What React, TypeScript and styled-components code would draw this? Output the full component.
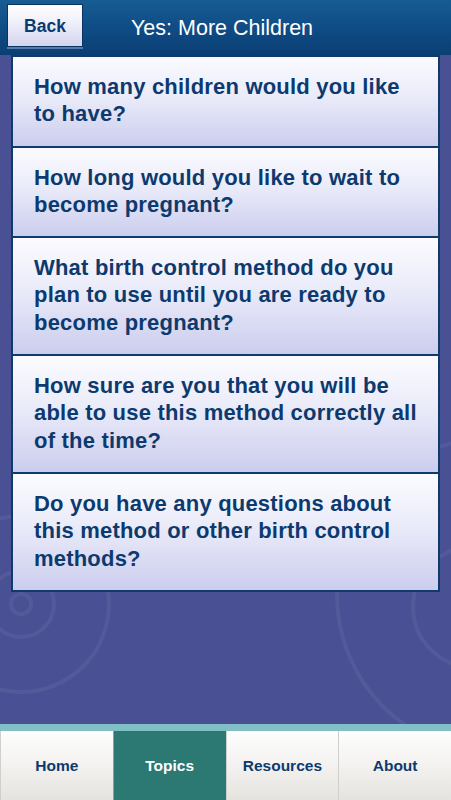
import React from "react";
import styled, { createGlobalStyle } from "styled-components";

const GlobalStyle = createGlobalStyle`
  html, body {
    margin: 0;
    padding: 0;
    height: 100%;
  }
  body {
    font-family: "Liberation Sans", Arial, Helvetica, sans-serif;
    background: #4a5094;
  }
  #root {
    height: 100%;
  }
  * {
    box-sizing: border-box;
  }
`;

const questions = [
  "How many children would you like to have?",
  "How long would you like to wait to become pregnant?",
  "What birth control method do you plan to use until you are ready to become pregnant?",
  "How sure are you that you will be able to use this method correctly all of the time?",
  "Do you have any questions about this method or other birth control methods?",
];

const tabs = ["Home", "Topics", "Resources", "About"];

function Swirls() {
  return (
    <StyledSwirls viewBox="0 0 451 669" preserveAspectRatio="none">
      <g fill="none" stroke="rgba(255,255,255,0.055)" strokeWidth="4">
        <circle cx="21" cy="549" r="10" />
        <circle cx="21" cy="549" r="33" />
        <circle cx="21" cy="549" r="88" />
        <circle cx="495" cy="540" r="158" />
        <circle cx="473" cy="552" r="60" />
      </g>
    </StyledSwirls>
  );
}

function App() {
  const [activeTab, setActiveTab] = React.useState("Topics");

  return (
    <StyledApp>
      <GlobalStyle />
      <StyledHeader>
        <StyledBackButton>Back</StyledBackButton>
        <h1>Yes: More Children</h1>
      </StyledHeader>
      <StyledMain>
        <Swirls />
        <StyledList>
          {questions.map((item, index) => {
            return <StyledCard key={index}>{item}</StyledCard>;
          })}
        </StyledList>
      </StyledMain>
      <StyledTabBar>
        {tabs.map((tab) => {
          return (
            <StyledTab
              key={tab}
              $active={tab === activeTab}
              onClick={() => setActiveTab(tab)}
            >
              {tab}
            </StyledTab>
          );
        })}
      </StyledTabBar>
    </StyledApp>
  );
}

const StyledApp = styled.div`
  height: 100vh;
  display: flex;
  flex-direction: column;
  overflow: hidden;
`;

const StyledHeader = styled.div`
  height: 55px;
  flex-shrink: 0;
  display: flex;
  align-items: flex-start;
  padding: 4px 0 0 7px;
  background: linear-gradient(to bottom, #175c94 0%, #0f4c86 50%, #0a3f74 100%);

  h1 {
    margin: 12px 0 0 48px;
    font-size: 21.5px;
    font-weight: normal;
    color: #ffffff;
    line-height: 24px;
  }
`;

const StyledBackButton = styled.button`
  width: 76px;
  height: 43px;
  padding: 2px 0 0;
  border: 1.5px solid #0a3360;
  background: linear-gradient(to bottom, #ffffff 0%, #eeeffa 45%, #d3d5f0 100%);
  box-shadow: 0 2px 0 rgba(140, 175, 215, 0.55);
  font-family: "Liberation Sans", Arial, sans-serif;
  font-size: 17.5px;
  font-weight: bold;
  color: #0d3a6e;
  cursor: pointer;
`;

const StyledMain = styled.div`
  flex: 1;
  position: relative;
  background: #4a5094;
`;

const StyledSwirls = styled.svg`
  position: absolute;
  top: 0;
  left: 0;
  width: 100%;
  height: 100%;
  z-index: 0;
`;

const StyledList = styled.div`
  position: relative;
  z-index: 1;
  padding: 0 11px;
  display: flex;
  flex-direction: column;
`;

const StyledCard = styled.div`
  border: 2px solid #0f3a6c;
  padding: 16px 18px 18px 21px;
  background: linear-gradient(to bottom, #fbfbff 0%, #eaebf9 45%, #cbcdee 100%);
  font-size: 22px;
  font-weight: bold;
  letter-spacing: 0.2px;
  line-height: 27.3px;
  color: #0d3a6e;
  cursor: pointer;

  & + & {
    margin-top: -2px;
  }
`;

const StyledTabBar = styled.div`
  height: 76px;
  flex-shrink: 0;
  display: grid;
  grid-template-columns: repeat(4, 1fr);
  border-top: 7px solid #7fbfc5;
  background: #4a5094;
`;

const StyledTab = styled.div<{ $active: boolean }>`
  display: flex;
  align-items: center;
  justify-content: center;
  padding-top: 1px;
  font-size: 15.5px;
  font-weight: bold;
  color: ${(p) => (p.$active ? "#ffffff" : "#0d3a6e")};
  background: ${(p) =>
    p.$active
      ? "#2c7873"
      : "linear-gradient(to bottom, #fefefe 0%, #f3f2f0 50%, #e6e3df 100%)"};
  border-left: 1.5px solid ${(p) => (p.$active ? "#5fb3bb" : "#cfcfcf")};
  cursor: pointer;
`;

export default App;
